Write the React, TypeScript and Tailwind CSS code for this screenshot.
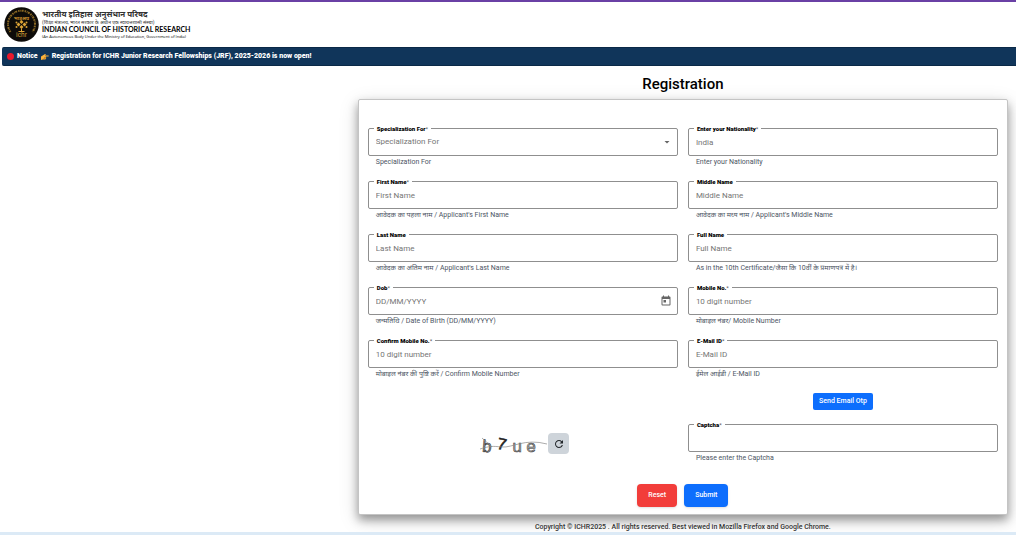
import React from 'react';
import { clsx } from 'clsx';
import { MdArrowDropDown, MdRefresh, MdToday } from 'react-icons/md';

interface FieldProps {
  id: string;
  label: string;
  hint: string;
  placeholder?: string;
  required?: boolean;
  type?: 'text' | 'select' | 'date';
}

const fields: FieldProps[] = [
  { id: 'specialization', label: 'Specialization For', hint: 'Specialization For', placeholder: 'Specialization For', required: true, type: 'select' },
  { id: 'nationality', label: 'Enter your Nationality', hint: 'Enter your Nationality', placeholder: 'India', required: true },
  { id: 'firstName', label: 'First Name', hint: "आवेदक का पहला नाम / Applicant's First Name", placeholder: 'First Name', required: true },
  { id: 'middleName', label: 'Middle Name', hint: "आवेदक का मध्य नाम / Applicant's Middle Name", placeholder: 'Middle Name' },
  { id: 'lastName', label: 'Last Name', hint: "आवेदक का अंतिम नाम / Applicant's Last Name", placeholder: 'Last Name' },
  { id: 'fullName', label: 'Full Name', hint: 'As in the 10th Certificate/जैसा कि 10वीं के प्रमाणपत्र में है।', placeholder: 'Full Name' },
  { id: 'dob', label: 'Dob', hint: 'जन्मतिथि / Date of Birth (DD/MM/YYYY)', placeholder: 'DD/MM/YYYY', required: true, type: 'date' },
  { id: 'mobile', label: 'Mobile No.', hint: 'मोबाइल नंबर/ Mobile Number', placeholder: '10 digit number', required: true },
  { id: 'confirmMobile', label: 'Confirm Mobile No.', hint: 'मोबाइल नंबर की पुष्टि करें / Confirm Mobile Number', placeholder: '10 digit number', required: true },
  { id: 'email', label: 'E-Mail ID', hint: 'ईमेल आईडी / E-Mail ID', placeholder: 'E-Mail ID', required: true },
];

const Field = ({ id, label, hint, placeholder, required = false, type = 'text' }: FieldProps) => {
  const control = 'h-full min-w-0 flex-1 appearance-none bg-transparent px-[7px] text-[8px] outline-none';

  return (
    <div className="h-[53px]">
      <div className="relative flex h-7 items-center rounded-xs border border-[#8f8f8f]">
        <label htmlFor={id} className="absolute -top-1 left-[5px] bg-white px-[3px] text-[6px] leading-[7px] font-black text-black">
          {label}
          {required && <span className="font-normal text-[#555]">*</span>}
        </label>
        {type === 'select' ? (
          <select id={id} className={clsx(control, 'text-[#757575]')} defaultValue="">
            <option value="">{placeholder}</option>
          </select>
        ) : (
          <input id={id} type="text" placeholder={placeholder} className={clsx(control, 'placeholder:text-[#757575]')} />
        )}
        {type === 'select' && <MdArrowDropDown className="pointer-events-none mr-1 size-3 text-[#666]" />}
        {type === 'date' && (
          <button type="button" aria-label="Open calendar" className="mr-[5px]">
            <MdToday className="size-3 text-[#666]" />
          </button>
        )}
      </div>
      <p className="px-2 pt-0.5 text-[7px] leading-2 whitespace-nowrap text-[#4c5563]">{hint}</p>
    </div>
  );
};

const Emblem = () => (
  <svg viewBox="0 0 70 70" className="size-[35px] shrink-0" role="img" aria-label="ICHR">
    <circle cx="35" cy="35" r="34.500" fill="#0d0b09" />
    {/* lettering ring */}
    <path d="M13 50A27 27 0 1 1 57 50" fill="none" stroke="#8a6824" strokeWidth="4" strokeDasharray="3 1.500 1.500 1 4 2" />
    <text x="35" y="25" fontSize="10" fontWeight="700" fill="#c98f2d" textAnchor="middle">भाइअप</text>
    <g fill="#dba336">
      <path d="M35 26l4 4-4 4-4-4zM35 36l4 4-4 4-4-4zM29 31l4 4-4 4-4-4zM41 31l4 4-4 4-4-4z" />
      <circle cx="25" cy="31" r="2" />
      <circle cx="45" cy="31" r="2" />
      <circle cx="25" cy="40" r="2" />
      <circle cx="45" cy="40" r="2" />
      <path d="M34 43h2v5h5v2H29v-2h5z" />
    </g>
    <text x="35" y="60" fontSize="13" fill="#dba336" textAnchor="middle">ichr</text>
  </svg>
);

const Captcha = () => (
  <svg viewBox="0 0 68 26" className="h-[26px] w-[68px]" role="img" aria-label="Captcha">
    <g fontFamily="Liberation Mono, monospace" fontSize="17" strokeWidth="0.5">
      <text x="2" y="19" fill="#888" stroke="#222" transform="rotate(4 7 12)">b</text>
      <text x="17" y="17" fill="#222" stroke="#222" transform="rotate(12 23 10)">7</text>
      <text x="32" y="19" fill="#aaa" stroke="#333">u</text>
      <text x="46" y="19" fill="#aaa" stroke="#333">e</text>
    </g>
    <path d="M0 16C10 13 12 13 22 14S45 5 67 11M2 5l10 9" fill="none" stroke="#888" strokeWidth="0.7" />
  </svg>
);

const App = () => {
  return (
    <div className="border-t-2 border-[#6a40a5] bg-white font-['Roboto','Noto_Sans_Devanagari','Noto_Sans',sans-serif] text-black">
      <header className="flex h-[45px] items-center gap-[3px] px-1">
        <Emblem />
        <div className="flex flex-col whitespace-nowrap">
          <span className="text-[8px] leading-[9px] font-bold text-[#333]">भारतीय इतिहास अनुसंधान परिषद</span>
          <span className="text-[5px] leading-[6px] text-[#333]">(शिक्षा मंत्रालय, भारत सरकार के अधीन एक स्वायत्तशासी संस्था)</span>
          <span className="font-['Lato',sans-serif] text-[7px] leading-[9px] font-bold">INDIAN COUNCIL OF HISTORICAL RESEARCH</span>
          <span className="font-['Open_Sans',sans-serif] text-[4px] leading-[6px] text-black">(An Autonomous Body Under the Ministry of Education, Government of India)</span>
        </div>
      </header>

      <div className="ml-0.5 flex h-[19px] items-center rounded-l-xs border-y border-[#0a2947] bg-[#10355a] px-[5px] text-[7px] font-black whitespace-nowrap text-white">
        <span className="mr-[3px] size-[7px] rounded-full bg-[#e8192c]" />
        Notice
        <svg viewBox="0 0 16 12" className="mx-[3px] h-[6px] w-[8px]" aria-hidden="true">
          <path d="M0 5l5-3 3-2 2 1-2 2h7q1 1 0 2H9q2 1 1 2 1 1 0 2 0 2-2 2H4l-4 1z" fill="#fbb33c" />
          <path d="M6 7h4M5 9h4" stroke="#a86512" />
        </svg>
        Registration for ICHR Junior Research Fellowships (JRF), 2025-2026 is now open!
      </div>

      <main className="mr-2 ml-auto w-[64%]">
        <h1 className="pt-2 pb-[5px] text-center text-[15px] leading-5 font-medium">Registration</h1>

        <form className="rounded-xs border border-[#c4c4c4] bg-white px-[9px] pt-7 pb-[7px] shadow-[0_5px_10px_0_rgba(0,0,0,0.35),0_5px_20px_0_rgba(0,0,0,0.15)]">
          <div className="grid grid-cols-2 gap-x-2.5">
            {fields.map((field) => (
              <Field key={field.id} {...field} />
            ))}
          </div>

          <div className="grid grid-cols-2 gap-x-2.5">
            <div className="col-start-2 flex h-[31px] items-start justify-center">
              <button type="button" className="h-[17px] rounded-xs bg-[#0d6efd] px-1.5 text-[7px] font-medium text-white">
                Send Email Otp
              </button>
            </div>
            <div className="flex items-start justify-center pt-[9px] pl-1">
              <Captcha />
              <button type="button" aria-label="Refresh captcha" className="flex h-[21px] w-[21px] items-center justify-center rounded-sm bg-[#ced4da]">
                <MdRefresh className="size-3 text-[#212529]" />
              </button>
            </div>
            <Field id="captcha" label="Captcha" hint="Please enter the Captcha" required />
          </div>

          <div className="flex justify-center gap-[7px] pt-[7px]">
            <button type="reset" className="h-[23px] rounded-sm bg-[#f23d3a] px-[11px] text-[7px] font-medium text-white shadow-sm">
              Reset
            </button>
            <button type="submit" className="h-[23px] rounded-sm bg-[#0d6efd] px-[11px] text-[7px] font-medium text-white shadow-sm">
              Submit
            </button>
          </div>
        </form>

        <footer className="pt-2 text-center text-[7px] leading-[9px] font-medium text-[#333]">
          Copyright © ICHR2025 . All rights reserved. Best viewed in Mozilla Firefox and Google Chrome.
        </footer>
      </main>
      <div className="h-[3px] bg-[#dceaf6]" />
    </div>
  );
};

export default App;
